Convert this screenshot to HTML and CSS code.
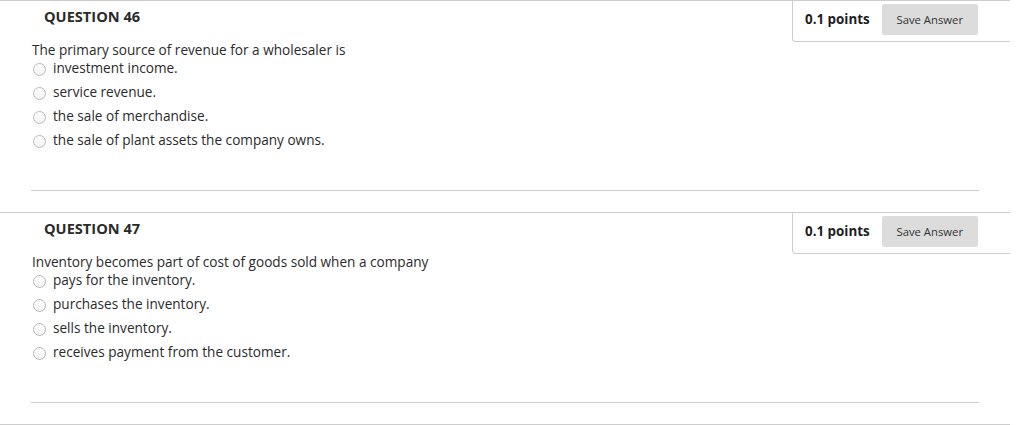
FILE: index.html
```html
<!DOCTYPE html>
<html>
<head>
<meta charset="utf-8">
<link rel="stylesheet" href="styles.css">
</head>
<body>
<div class="page">
  <section class="question">
    <div class="qhead">
      <h3 class="qtitle">QUESTION 46</h3>
      <div class="points">
        <span class="pts">0.1 points</span>
        <button class="save">Save Answer</button>
      </div>
    </div>
    <div class="qbody">
      <p class="qtext">The primary source of revenue for a wholesaler is</p>
      <ul class="options">
        <li><span class="radio"></span>investment income.</li>
        <li><span class="radio"></span>service revenue.</li>
        <li><span class="radio"></span>the sale of merchandise.</li>
        <li><span class="radio"></span>the sale of plant assets the company owns.</li>
      </ul>
    </div>
    <div class="sep"></div>
  </section>
  <section class="question">
    <div class="qhead">
      <h3 class="qtitle">QUESTION 47</h3>
      <div class="points">
        <span class="pts">0.1 points</span>
        <button class="save">Save Answer</button>
      </div>
    </div>
    <div class="qbody">
      <p class="qtext">Inventory becomes part of cost of goods sold when a company</p>
      <ul class="options">
        <li><span class="radio"></span>pays for the inventory.</li>
        <li><span class="radio"></span>purchases the inventory.</li>
        <li><span class="radio"></span>sells the inventory.</li>
        <li><span class="radio"></span>receives payment from the customer.</li>
      </ul>
    </div>
    <div class="sep"></div>
  </section>
  <div class="endline"></div>
</div>
</body>
</html>
```

FILE: styles.css
```css
html, body {
  margin: 0;
  padding: 0;
  background: #fff;
}
body {
  font-family: "Open Sans", "Noto Sans", sans-serif;
  color: #2b2b2b;
}
.page {
  width: 1010px;
}
.question {
  border-top: 1px solid #cdcdcd;
}
.qhead {
  display: flex;
  justify-content: space-between;
  align-items: flex-start;
  height: 41px;
}
.qtitle {
  margin: 0;
  padding: 6px 0 0 44px;
  font-size: 14.6px;
  line-height: 18px;
  font-weight: 700;
  color: #2b2b2b;
}
.points {
  box-sizing: border-box;
  width: 218px;
  height: 41px;
  border-left: 1px solid #cdcdcd;
  border-bottom: 1px solid #cdcdcd;
  border-bottom-left-radius: 4px;
  display: flex;
  align-items: flex-start;
  padding: 3px 0 0 12px;
}
.pts {
  font-size: 13.4px;
  font-weight: 700;
  line-height: 31px;
  color: #1e1e1e;
  margin-right: 12px;
}
.save {
  width: 96px;
  height: 31px;
  border: none;
  border-radius: 2px;
  background: #dcdcdc;
  font-family: "Open Sans", "Noto Sans", sans-serif;
  font-size: 11.3px;
  color: #333;
  padding: 0;
}
.qbody {
  padding-left: 32px;
}
.qtext {
  margin: 0;
  font-size: 13.6px;
  line-height: 16px;
}
.options {
  list-style: none;
  margin: 0;
  padding: 0;
  display: flex;
  flex-direction: column;
  gap: 4px;
}
.options li {
  display: flex;
  align-items: center;
  font-size: 13.6px;
  line-height: 20px;
}
.radio {
  box-sizing: border-box;
  width: 13px;
  height: 13px;
  margin: 2px 7px 0 1px;
  border-radius: 50%;
  border: 1px solid #b9b9b9;
  background: linear-gradient(#fff, #f3f3f3);
  flex: none;
}
.sep {
  margin: 40px 0 21px 31px;
  width: 948px;
  border-top: 1px solid #cdcdcd;
}
.endline {
  border-top: 1px solid #cdcdcd;
}
```
